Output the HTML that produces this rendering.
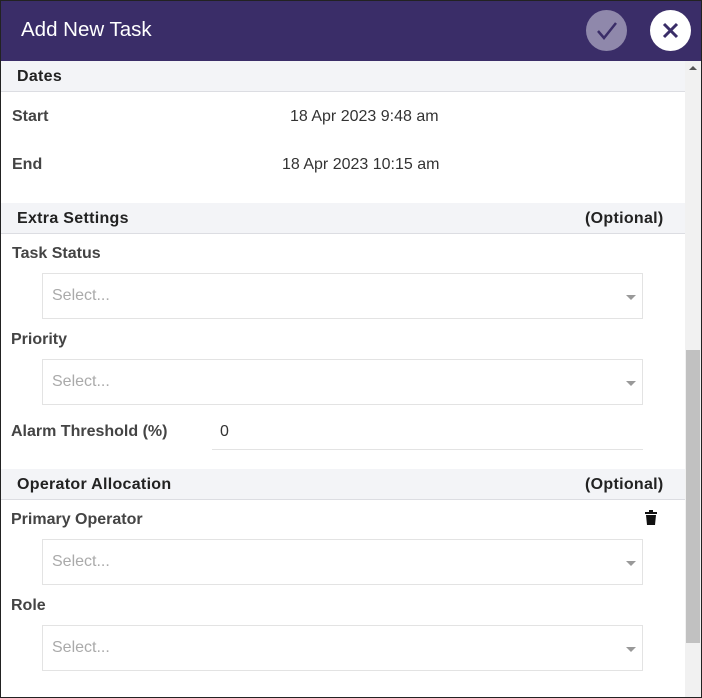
<!DOCTYPE html>
<html><head><style>
*{box-sizing:border-box;margin:0;padding:0}
body{width:702px;height:698px;overflow:hidden;font-family:"Liberation Sans",Arial,sans-serif;background:#fff;position:relative}
.frame{position:absolute;left:0;top:0;width:702px;height:698px;border:1px solid #222;pointer-events:none;z-index:9}
.hdr{position:absolute;left:0;top:0;width:702px;height:61px;background:#3a2d68;}
.hdr .t{position:absolute;left:21px;top:18px;color:#fff;font-size:20.5px}
.c{position:absolute;top:10px;width:41px;height:41px;border-radius:50%}
.a{position:absolute;font-size:16px;color:#333;margin-top:2px}
.b{font-weight:bold;color:#444;font-size:16px;letter-spacing:0}
.sec{position:absolute;left:1px;width:684px;height:31px;background:#f3f4f7;border-bottom:1px solid #dcdde2}
.sec span{position:absolute;top:7px;font-size:16px;font-weight:bold;color:#222;letter-spacing:0.3px}
.sel{position:absolute;left:42px;width:601px;height:46px;border:1px solid #e3e3e3;font-size:16px;color:#aaa;padding:13px 0 0 9px}
.sel:after{content:"";position:absolute;right:6px;top:21px;border:5px solid transparent;border-top:5px solid #999;border-bottom:0}
.sb{position:absolute;left:685px;top:61px;width:16px;height:636px;background:#f1f1f1}
.th{position:absolute;left:686px;top:350px;width:14px;height:293px;background:#c1c1c1}
</style></head><body>
<div class="hdr"><div class="t">Add New Task</div>
<div class="c" style="left:586px;background:#8f88ab"><svg width="41" height="41"><path d="M12 21l6 7 12-15" stroke="#3a2d68" stroke-width="2.5" fill="none"/></svg></div>
<div class="c" style="left:650px;background:#fff"><svg width="41" height="41"><path d="M14 14l13 13M27 14l-13 13" stroke="#3a2d68" stroke-width="3" fill="none"/></svg></div>
</div>
<div class="sec" style="top:61px"><span style="left:16px">Dates</span></div>
<div class="a b" style="left:12px;top:106px">Start</div>
<div class="a" style="left:290px;top:106px">18 Apr 2023 9:48 am</div>
<div class="a b" style="left:12px;top:154px">End</div>
<div class="a" style="left:282px;top:154px">18 Apr 2023 10:15 am</div>
<div class="sec" style="top:203px"><span style="left:16px">Extra Settings</span><span style="left:584px">(Optional)</span></div>
<div class="a b" style="left:12px;top:243px">Task Status</div>
<div class="sel" style="top:273px">Select...</div>
<div class="a b" style="left:11px;top:329px">Priority</div>
<div class="sel" style="top:359px">Select...</div>
<div class="a b" style="left:11px;top:421px">Alarm Threshold (%)</div>
<div class="a" style="left:220px;top:421px">0</div>
<div style="position:absolute;left:212px;top:449px;width:431px;height:1px;background:#e3e3e3"></div>
<div class="sec" style="top:469px"><span style="left:16px">Operator Allocation</span><span style="left:584px">(Optional)</span></div>
<div class="a b" style="left:11px;top:509px">Primary Operator</div>
<svg style="position:absolute;left:644px;top:510px" width="14" height="16"><rect x="1" y="2" width="12" height="2" fill="#111"/><rect x="5" y="0" width="4" height="2" fill="#111"/><path d="M2 5h10l-1 10H3z" fill="#111"/></svg>
<div class="sel" style="top:539px">Select...</div>
<div class="a b" style="left:11px;top:595px">Role</div>
<div class="sel" style="top:625px">Select...</div>
<div class="sb"></div><div class="th"></div>
<div style="position:absolute;left:689px;top:66px;border:4px solid transparent;border-bottom:4px solid #555;border-top:0"></div>
<div class="frame"></div>
</body></html>
